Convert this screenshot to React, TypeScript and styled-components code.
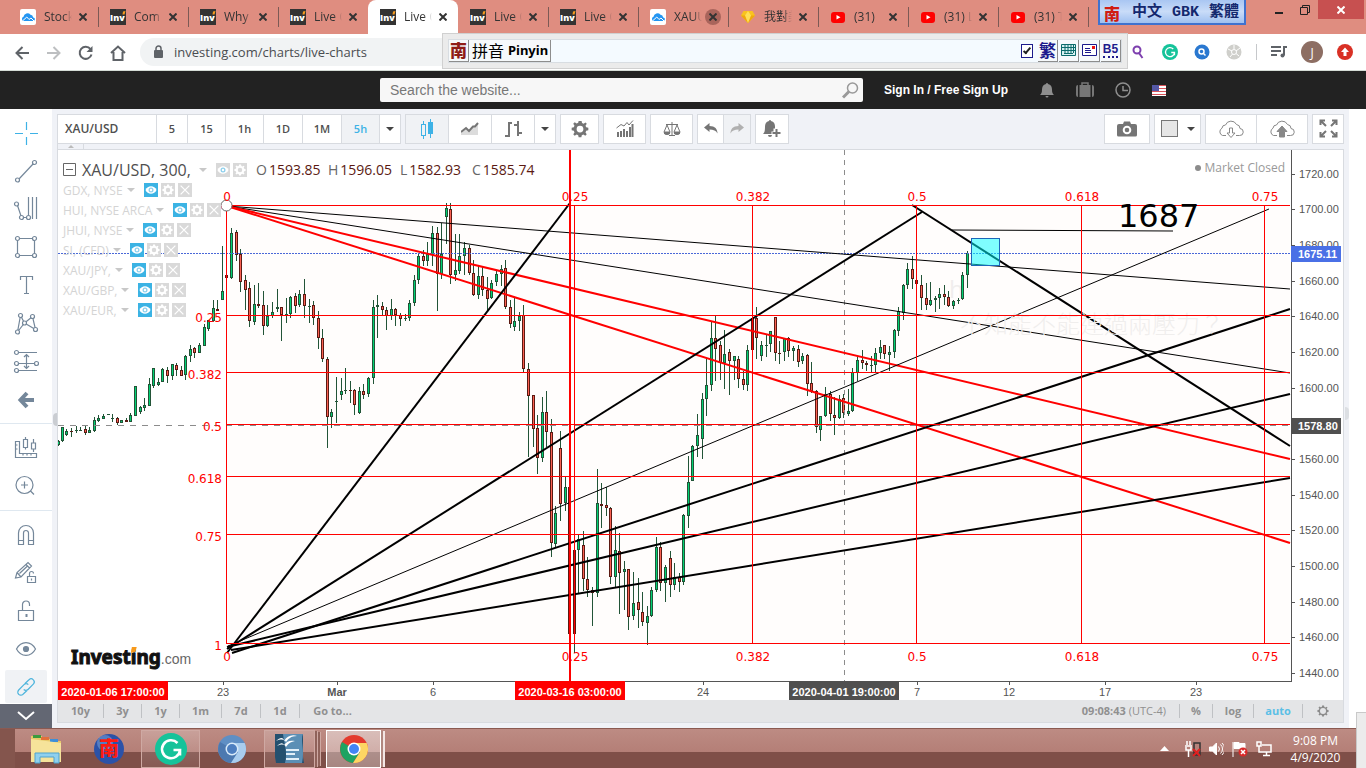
import React from 'react';
import styled, { createGlobalStyle, css } from 'styled-components';

const ui = '"Open Sans", "Noto Sans", sans-serif';
const arial = '"Liberation Sans", Arial, sans-serif';
const cjk = '"Noto Sans CJK TC", "Noto Sans CJK SC", sans-serif';

const GlobalStyle = createGlobalStyle`
  *, *::before, *::after { box-sizing: border-box; }
  body { margin: 0; background: #fff; font-family: ${ui}; overflow-x: hidden; }
  button { font: inherit; color: inherit; background: none; border: 0; padding: 0; margin: 0; cursor: pointer; }
  svg { display: block; flex: none; }
`;

const Page = styled.div`
  display: flex;
  flex-direction: column;
  min-height: 100vh;
  position: relative;
`;

/* ---------- browser tabs ---------- */

const TabStrip = styled.div`
  display: flex;
  height: 34px;
  padding-left: 8px;
  background: #df8d80;
  position: relative;
`;

const Tab = styled.div<{ $active?: boolean; $line?: boolean }>`
  display: flex;
  align-items: center;
  flex: none;
  width: 90px;
  height: 34px;
  padding-left: 12px;
  gap: 8px;
  font-size: 12px;
  color: #333;
  position: relative;
  ${(p) =>
    p.$active &&
    css`
      background: #fff;
      border-radius: 8px 8px 0 0;
    `}
  ${(p) =>
    p.$line &&
    css`
      &::after {
        content: '';
        position: absolute;
        right: -1px;
        top: 7px;
        width: 1px;
        height: 20px;
        background: #7c5a55;
      }
    `}
`;

const TabTitle = styled.span`
  width: 28px;
  overflow: hidden;
  white-space: nowrap;
  line-height: 18px;
  font-family: ${ui}, ${cjk};
  mask-image: linear-gradient(to right, #000 70%, transparent);
`;

const TabClose = styled.button<{ $hover?: boolean }>`
  display: grid;
  place-items: center;
  width: 16px;
  height: 16px;
  margin-left: -5px;
  border-radius: 8px;
  background: ${(p) => (p.$hover ? '#a9645b' : 'transparent')};
`;

const WindowButtons = styled.div`
  display: flex;
  margin-left: auto;
  height: 19px;
`;

const WindowButton = styled.button<{ $close?: boolean }>`
  display: grid;
  place-items: center;
  width: ${(p) => (p.$close ? 46 : 26)}px;
  margin-right: ${(p) => (p.$close ? 2 : 0)}px;
  height: 19px;
  background: ${(p) => (p.$close ? '#c75050' : 'transparent')};
`;

/* ---------- address bar ---------- */

const NavBar = styled.div`
  display: flex;
  align-items: center;
  height: 37px;
  padding: 0 11px 0 14px;
  border-bottom: 1px solid #d5dcd6;
  background: #fff;
`;

const NavButton = styled.button`
  display: grid;
  place-items: center;
  width: 32px;
  height: 28px;
  margin-top: 1px;
  &:first-child { width: 16px; margin-right: 8px; }
`;

const AddressBox = styled.div`
  display: flex;
  align-items: center;
  flex: 1;
  height: 28px;
  margin-left: 6px;
  padding-left: 13px;
  gap: 10px;
  border-radius: 14px;
  background: #f1f3f4;
`;

const AddressInput = styled.input`
  flex: 1;
  height: 24px;
  border: 0;
  outline: 0;
  background: transparent;
  color: #4a4d51;
  font: 13px ${ui};
  padding: 0;
`;

const Extensions = styled.div`
  display: flex;
  align-items: center;
  margin-left: 260px;
  gap: 12px;
`;

const ExtButton = styled.button`
  display: grid;
  place-items: center;
  width: 20px;
  height: 24px;
`;

const ExtDivider = styled.span`
  width: 1px;
  height: 16px;
  background: #c6c8cb;
`;

const Avatar = styled.button`
  width: 22px;
  height: 22px;
  border-radius: 11px;
  background: #8d6e63;
  color: #fff;
  font: 12px ${ui};
`;

/* ---------- floating input-method windows ---------- */

const ImeBar = styled.div`
  position: absolute;
  left: 442px;
  top: 33px;
  width: 686px;
  height: 36px;
  display: flex;
  padding: 5px;
  background: #ebebeb;
  border: 1px solid #d0d0d0;
`;

const ImeTrack = styled.div`
  display: flex;
  flex: 1;
  align-items: center;
  gap: 1px;
  border: 1px solid #d8dde2;
  background: #f4faff;
`;

const ImeKey = styled.button<{ $mode?: boolean }>`
  display: flex;
  align-items: center;
  justify-content: center;
  gap: 4px;
  height: 22px;
  width: ${(p) => (p.$mode ? 81 : 20)}px;
  background: #f6f9fb;
  border-right: 1px solid #8d8d8d;
  border-bottom: 1px solid #8d8d8d;
  color: ${(p) => (p.$mode ? '#000' : '#1c1a8c')};
  font: ${(p) => (p.$mode ? 16 : 17)}px ${cjk};
  line-height: 20px;
  padding-bottom: 2px;
  b { font: bold 13px "Noto Sans", sans-serif; }
`;

const ImeRed = styled.span`
  color: #8f1d18;
  font-weight: 900;
`;

const ImeBold = styled.span`
  font-weight: 700;
`;

const ImeSpring = styled.span`
  flex: 1;
`;

const ImeCheck = styled.input`
  appearance: none;
  width: 12px;
  height: 14px;
  margin: 0 4px;
  border: 1px solid #1c1a8c;
  background: #fff;
  position: relative;
  &:checked::after {
    content: '';
    position: absolute;
    left: 3px;
    top: 1px;
    width: 4px;
    height: 8px;
    border: solid #222;
    border-width: 0 2px 2px 0;
    transform: rotate(40deg);
  }
`;

const B5 = styled.span`
  font: bold 12px ${arial};
  line-height: 14px;
  border-bottom: 2px dotted #1c1a8c;
`;

const GbkWindow = styled.div`
  position: absolute;
  left: 1098px;
  top: 0;
  height: 25px;
  width: 148px;
  display: flex;
  align-items: center;
  padding: 3px 4px 0;
  border: 2px solid #3f72cf;
  border-top: 0;
  background: linear-gradient(#a9c6f2, #c9dcf8 50%, #9fc0f0);
  color: #14286e;
  font: bold 15px "Liberation Mono", ${cjk};
  line-height: 22px;
  gap: 10px;
  white-space: nowrap;
`;

const GbkMark = styled.span`
  color: #d01d12;
  margin-right: 2px;
  font: 900 16px ${cjk};
  line-height: 22px;
`;

/* ---------- site header ---------- */

const SiteHeader = styled.header`
  display: flex;
  align-items: center;
  height: 38px;
  padding-left: 380px;
  background: #222;
  color: #fff;
`;

const SearchBox = styled.label`
  display: flex;
  align-items: center;
  width: 483px;
  height: 24px;
  padding: 0 4px 0 10px;
  border-radius: 2px;
  background: #f7f7f7;
`;

const SearchInput = styled.input`
  flex: 1;
  border: 0;
  outline: 0;
  padding: 0;
  background: transparent;
  font: 14px ${arial};
  &::placeholder { color: #777; opacity: 1; }
`;

const SignIn = styled.a`
  margin-left: 21px;
  margin-right: 31px;
  color: #fff;
  text-decoration: none;
  font: bold 12px ${arial};
`;

const HeaderIcons = styled.div`
  display: flex;
  align-items: center;
  gap: 21px;
`;

/* ---------- main area ---------- */

const Main = styled.main`
  display: flex;
  flex: 1;
  padding-right: 17px;
`;

const Tools = styled.nav`
  display: flex;
  flex-direction: column;
  width: 52px;
  padding-top: 5px;
  background: #fff;
`;

const Tool = styled.button<{ $on?: boolean }>`
  display: grid;
  place-items: center;
  height: ${(p) => (p.$on ? 33 : 38)}px;
  margin: ${(p) => (p.$on ? '2px 5px 1px' : '0')};
  border-radius: 2px;
  background: ${(p) => (p.$on ? '#f0f2f5' : 'transparent')};
`;

const ToolRule = styled.hr`
  width: 100%;
  margin: 5px 0;
  border: 0;
  border-top: 1px solid #dfe8f0;
`;

const ToolScroll = styled.button`
  display: grid;
  place-items: center;
  flex: 1;
  background: #636773;
`;

const ChartSide = styled.section`
  flex: 1;
  min-width: 0;
  padding: 5px;
  background: #f0f2f7;
  position: relative;
`;

/* Collapse handles that sit on the frame edges. */
const EdgeHandle = styled.button<{ $right?: boolean }>`
  position: absolute;
  top: ${(p) => (p.$right ? 298 : 304)}px;
  ${(p) => (p.$right ? 'right: 0;' : 'left: 1px;')}
  width: 4px;
  height: 13px;
  border-radius: ${(p) => (p.$right ? '0 4px 4px 0' : '4px 0 0 4px')};
  background: ${(p) => (p.$right ? '#dcdfe3' : '#cacdd2')};
`;

const TopBar = styled.div`
  display: flex;
  justify-content: space-between;
  height: 30px;
`;

const Groups = styled.div`
  display: flex;
  gap: 4px;
`;

const Group = styled.div`
  display: flex;
  border: 1px solid #d8dbe0;
  background: #fff;
`;

const Cell = styled.button<{ $w: number; $on?: boolean; $title?: boolean }>`
  display: flex;
  align-items: center;
  justify-content: ${(p) => (p.$title ? 'flex-start' : 'center')};
  gap: 9px;
  width: ${(p) => p.$w}px;
  padding-left: ${(p) => (p.$title ? 7 : 0)}px;
  padding-bottom: 1px;
  border-right: 1px solid #d8dbe0;
  background: ${(p) => (p.$on ? '#f0f2f5' : 'transparent')};
  color: ${(p) => (p.$on ? '#3eb2e6' : '#4f4f4f')};
  font: 600 ${(p) => (p.$title ? 12 : 11)}px ${ui};
  &:last-child { border-right: 0; }
`;

const Swatch = styled.i`
  width: 17px;
  height: 17px;
  border: 1px solid #777;
  background: #e6e6e6;
`;

const Caret = styled.i<{ $c?: string }>`
  width: 0;
  height: 0;
  border: 4px solid transparent;
  border-bottom: 0;
  border-top-color: ${(p) => p.$c || '#444'};
`;

const Ledge = styled.div`
  display: flex;
  height: 6px;
  border: solid #d8dbe0;
  border-width: 0 0 1px 1px;
`;

const LedgeTab = styled.button`
  display: grid;
  place-items: center;
  width: 26px;
  border-right: 1px solid #d8dbe0;
  i { transform: rotate(180deg); border-width: 3px; border-bottom: 0; }
`;

const ChartFrame = styled.div`
  position: relative;
  border: solid #d8dbe0;
  border-width: 0 1px;
  background: #fff;
`;

const Plot = styled.svg`
  width: 100%;
  height: auto;
`;

const Legend = styled.div`
  position: absolute;
  left: 5px;
  top: 9px;
  display: flex;
  flex-direction: column;
`;

const LegendTitle = styled.div`
  display: flex;
  align-items: center;
  height: 21px;
  font: 16px ${ui};
  color: #4f4f4f;
  white-space: nowrap;
`;

const LegendName = styled.span`
  width: 113px;
  margin-left: 6px;
  font-weight: 500;
`;

const Quote = styled.span`
  width: 72px;
  font-size: 14px;
  color: #666;
  b { font-weight: 400; color: #5b1a13; margin-left: 2px; }
`;

const Quotes = styled.div`
  display: flex;
  margin-left: 9px;
`;

const LegendRow = styled.div`
  display: flex;
  align-items: center;
  height: 20px;
  font: 12px ${ui};
  color: #d4d4d4;
  white-space: nowrap;
`;

const LegendButtons = styled.div`
  display: flex;
  gap: 3px;
  margin-left: 9px;
`;

const SmallButton = styled.button<{ $on?: boolean }>`
  display: grid;
  place-items: center;
  width: 14px;
  height: 14px;
  background: ${(p) => (p.$on ? '#3bb3e4' : '#d9d9d9')};
`;

const RowCaret = styled(Caret)`
  margin-left: 4px;
`;

const MarketState = styled.div`
  position: absolute;
  right: 58px;
  top: 9px;
  display: flex;
  align-items: center;
  gap: 4px;
  font: 12px ${ui};
  line-height: 18px;
  color: #999;
  &::before {
    content: '';
    width: 6px;
    height: 6px;
    border-radius: 3px;
    background: #8c8c8c;
  }
`;

const Logo = styled.div`
  position: absolute;
  left: 13px;
  bottom: 29px;
  display: flex;
  align-items: baseline;
  font: bold 19px "Noto Sans", sans-serif;
  line-height: 28px;
  color: #111;
  -webkit-text-stroke: 1px #111;
  small { font: 14px ${arial}; color: #666; -webkit-text-stroke: 0; }
`;

const LogoDot = styled.span`
  position: relative;
  &::before {
    content: '';
    position: absolute;
    left: 0;
    top: 4px;
    width: 6px;
    height: 6px;
    background: #f79a1c;
    clip-path: polygon(20% 0, 100% 0, 80% 80%, 0 100%);
    box-shadow: 0 0 0 1px #fff;
  }
`;

const RangeBar = styled.div`
  display: flex;
  justify-content: space-between;
  align-items: center;
  height: 23px;
  padding-bottom: 1px;
  border: 1px solid #d8dbe0;
  border-top: 0;
  background: #e4e5e7;
  color: #909090;
  font: bold 11px ${ui};
`;

const RangeList = styled.div`
  display: flex;
  align-items: center;
`;

const RangeItem = styled.button<{ $w: number; $blue?: boolean }>`
  width: ${(p) => p.$w}px;
  height: 14px;
  line-height: 14px;
  border-left: 1px solid #bfc1c4;
  color: ${(p) => (p.$blue ? '#5bbfe6' : 'inherit')};
  display: grid;
  place-items: center;
  &:first-child { border-left: 0; }
`;

const Clock = styled.span`
  margin-right: 13px;
  span { font-weight: 400; }
`;

/* ---------- desktop taskbar ---------- */

const Taskbar = styled.footer`
  display: flex;
  height: 40px;
  background: #ececec;
`;

const TaskbarBody = styled.div`
  display: flex;
  align-items: center;
  flex: 1;
  padding-left: 15px;
  border-top: 1px solid #8a5a52;
  background:
    linear-gradient(#84554d, #84554d) 0 0 / 15px 100% no-repeat,
    linear-gradient(#bd8b83, #b47f77 23px, #7f4f48 23px, #7f4f48);
  color: #fff;
`;

const TaskButton = styled.button<{ $w: number; $open?: boolean; $front?: boolean; $stack?: boolean }>`
  display: grid;
  place-items: center;
  width: ${(p) => p.$w}px;
  height: 38px;
  ${(p) =>
    p.$open &&
    css`
      border: 1px solid #cfa9a3;
      background: linear-gradient(#ffffff30, #ffffff10);
    `}
  ${(p) =>
    p.$stack &&
    css`
      box-shadow: 3px 0 0 -1px #8f625a, 4px 0 0 -1px #cfa9a3, 7px 0 0 -2px #8f625a, 8px 0 0 -2px #cfa9a3;
    `}
  ${(p) =>
    p.$front &&
    css`
      border: 1px solid #fff;
      background: linear-gradient(#ffffff70, #ffffff50);
      box-shadow: 3px 0 0 -1px #b18880, 5px 0 0 -1px #f3e6e4;
    `}
`;

const TaskGap = styled.span<{ $w: number }>`
  width: ${(p) => p.$w}px;
`;

const Tray = styled.div`
  display: flex;
  align-items: center;
  gap: 8px;
  margin-left: auto;
`;

const TaskClock = styled.time`
  width: 76px;
  padding-right: 5px;
  text-align: center;
  font: 12px ${ui};
  line-height: 17px;
`;

const CornerPanel = styled.div`
  width: 10px;
  height: 56px;
  margin-top: -16px;
  border: solid #c9c9c9;
  border-width: 1px 0 0 1px;
  background: #ececec;
`;

/* ---------- chart data ---------- */

type Candle = { x: number; hi: number; top: number; bot: number; lo: number; up: boolean };

// Candles are stored per block: an origin and rows of
// "x wickTop bodyTop bodyBottom wickBottom direction" in thirds of a chart unit.
const blocks: { ox: number; oy: number; rows: string }[] = [
  {
    ox: 0,
    oy: 330,
    rows:
      '176 330 332 346 347 g;187 290 292 334 335 g;199 298 304 314 317 g;214 294 303 307 320 r;229 288 299 303 308 g;241 290 300 302 304 g;256 288 297 309 315 r;268 292 300 308 310 g;283 262 270 303 306 g;295 254 264 272 276 g;310 252 258 266 268 g;325 252 252 254 254 g;337 252 264 266 276 g;352 260 265 278 286 r;364 269 271 278 278 g;379 264 270 275 276 r;391 249 256 276 276 g;406 168 169 257 258 g;421 227 231 246 251 g;433 204 226 233 242 g;448 143 163 227 228 g;460 114 115 167 174 g;475 143 156 164 167 g;487 113 118 155 156 g;502 111 120 137 158 r;517 101 103 137 151 g;529 100 106 121 138 r;544 107 121 137 138 r;556 74 78 136 150 g;571 44 58 79 95 g;583 52 55 68 85 r;598 38 45 68 70 g',
  },
  {
    ox: 0,
    oy: 140,
    rows:
      '613 552 562 617 618 g;625 540 541 567 573 g;640 480 504 542 545 g;652 480 508 513 513 r;667 318 454 480 480 g;679 404 405 413 413 r;694 264 280 413 417 g;709 270 276 344 362 r;721 326 341 425 456 r;736 404 420 450 510 r;748 426 444 543 561 r;763 434 492 545 555 g;775 428 491 498 505 r;790 453 495 557 584 r;802 495 527 557 560 g;817 486 515 527 534 g;832 446 501 506 516 g',
  },
  {
    ox: 280,
    oy: 150,
    rows:
      '4 472 472 496 572 r;19 444 493 497 518 g;31 438 440 493 503 g;46 430 438 467 490 r;58 421 433 466 472 g;73 387 433 469 503 r;88 448 468 471 518 g;100 453 466 505 524 r;115 483 505 565 597 r;127 538 565 628 635 r;142 621 628 802 894 r;154 777 787 800 833 g;169 681 752 756 820 g;184 684 724 736 749 g;196 654 720 724 731 g;211 694 720 723 760 r;223 717 721 766 795 r;238 712 724 790 792 g;250 703 724 736 746 r;265 682 685 733 741 g;280 451 472 685 702 g;292 436 466 472 563 g;307 457 469 481 497 r;319 472 481 499 540 r;334 448 478 499 510 g;346 475 478 496 528 r;361 489 495 508 527 r;376 492 504 508 512 g;388 451 460 505 513 g;403 375 391 460 468 g;415 308 319 391 402 g;430 299 319 334 347 r;442 276 313 334 348 g;457 228 250 316 347 g;472 232 250 373 483 r;484 218 313 373 388 g;499 159 175 202 282 g;511 159 178 376 402 r;526 252 361 376 394 g;538 252 319 364 372 g;553 276 295 319 376 g;568 286 295 370 375 r;580 331 370 436 438 r;595 346 379 436 447 g;607 348 379 421 439 r;622 382 421 448 482 r;634 390 400 445 446 g;649 361 373 397 408 g;664 346 358 373 408 g;676 330 355 472 478 r;691 451 472 523 533 r;703 442 514 532 542 g;718 487 499 514 544 g;730 466 496 658 670 r;745 640 658 739 920 r',
  },
  {
    ox: 480,
    oy: 380,
    rows:
      '160 44 46 146 200 r;172 106 145 235 281 r;187 50 97 235 245 g;199 34 97 157 200 r;214 118 157 490 530 r;226 379 400 493 502 g;241 153 205 373 422 r;256 291 322 370 392 g;268 303 322 763 790 r;283 490 511 763 818 r;295 463 478 511 640 g;310 454 496 598 633 r;322 531 598 631 651 r;337 622 631 640 738 r;352 267 370 640 651 g;364 310 373 379 443 r;379 321 376 385 407 r;391 382 385 592 613 r;406 439 511 592 622 g;418 460 514 580 702 r;433 544 568 577 689 g;445 566 568 712 749 r;460 577 670 709 721 g;475 594 667 691 743 r;487 636 697 727 738 r;502 678 709 730 795 g;514 621 631 709 711 g;529 471 502 631 636 g;541 485 502 610 632 r;556 556 562 610 665 g;571 514 535 616 651 r;583 549 592 616 630 g;598 580 592 607 636 r;610 403 406 607 614 g;625 228 307 409 444 g;637 196 199 304 304 g;652 102 166 199 230 g;667 40 58 178 236 g',
  },
  {
    ox: 680,
    oy: 180,
    rows:
      '79 535 616 658 707 g;94 424 475 616 632 g;106 408 475 508 603 r;121 484 496 550 600 r;133 450 523 550 627 g;148 508 517 544 644 r;163 528 529 544 600 g;175 529 538 598 624 r;190 572 598 616 629 r;202 496 511 616 632 g;217 410 415 511 513 r;229 381 415 475 536 r;244 484 496 529 543 g;259 463 494 497 532 g;271 453 454 493 515 g;286 411 412 520 543 r;298 484 519 523 552 r;313 474 475 515 542 g;325 472 475 514 530 r;340 498 505 514 543 g;355 496 508 545 560 r;367 519 529 542 553 g;382 523 526 613 647 r;394 546 610 632 640 r;409 630 632 742 759 r;421 709 709 751 783 g;436 620 643 709 711 g;451 632 643 703 724 r;463 652 706 715 765 r;478 646 658 715 717 g;490 642 655 700 714 r;505 626 694 701 708 g;517 565 577 694 696 g;532 528 541 580 603 g;547 510 541 550 568 r;559 543 550 556 572 r;574 528 555 557 575 g;586 504 520 556 580 g;601 480 502 520 538 g;613 495 496 523 538 r;628 499 517 526 572 g;643 446 451 517 533 g;655 382 394 454 467 g;670 312 316 400 420 g;682 249 268 316 327 g;697 228 268 298 327 r;709 299 301 313 314 r;724 286 316 355 389 r;739 309 355 376 389 r;751 306 361 376 378 g;766 349 355 361 395 g;778 324 343 355 387 g;793 315 343 352 376 r;805 334 352 379 381 r;820 360 364 379 386 g;835 355 361 364 372 g;847 277 286 358 360 g;862 213 220 286 323 g',
  },
];

const candles: Candle[] = blocks.flatMap(({ ox, oy, rows }) =>
  rows.split(';').map((row) => {
    const f = row.split(' ');
    const y = (v: string) => oy + Math.round(Number(v) / 3);
    return {
      x: ox + Math.floor(Number(f[0]) / 3),
      hi: y(f[1]),
      top: y(f[2]),
      bot: y(f[3]),
      lo: y(f[4]),
      up: f[5] === 'g',
    };
  }),
);

const levels = [
  { y: 205, label: '0', ly: 212 },
  { y: 315, label: '0.25', ly: 322 },
  { y: 372, label: '0.382', ly: 379 },
  { y: 424, label: '0.5', ly: 431 },
  { y: 476, label: '0.618', ly: 483 },
  { y: 534, label: '0.75', ly: 541 },
  { y: 643, label: '1', ly: 650 },
];

const zones = [
  { x: 226, label: '0' },
  { x: 574, label: '0.25' },
  { x: 752, label: '0.382' },
  { x: 916, label: '0.5' },
  { x: 1081, label: '0.618' },
  { x: 1264, label: '0.75' },
];

const prices = Array.from({ length: 15 }, (_, i) => ({
  y: Math.round(173.5 + i * 35.69),
  label: `${1720 - i * 20}.00`,
}));

const cursorPrice = '1578.80';
const hiddenPrice = '1580.00';

const dates: [number, string, boolean?][] = [
  [223, '23'],
  [337, 'Mar', true],
  [433, '6'],
  [703, '24'],
  [917, '7'],
  [1009, '12'],
  [1105, '17'],
  [1196, '23'],
];

const fans: [number, number, number, number, string, number][] = [
  [227, 206, 1290, 289, '#000', 1],
  [227, 206, 1290, 373, '#000', 1],
  [227, 206, 1290, 459, '#f00', 2],
  [227, 206, 1290, 543, '#f00', 2],
  [227, 653, 570, 203, '#000', 2],
  [227, 649, 922, 212, '#000', 2],
  [228, 646, 1269, 209, '#000', 1],
  [232, 653, 1290, 309, '#000', 2],
  [227, 647, 1290, 394, '#000', 2],
  [231, 650, 1290, 478, '#000', 2],
  [912, 205, 1290, 446, '#000', 2],
  [952, 230, 1173, 231, '#000', 1],
];

function PriceTag({ y, color, label }: { y: number; color: string; label: string }) {
  return (
    <g>
      <rect x="1291" y={y - 8} width="50" height="16" fill={color} shapeRendering="crispEdges" />
      <text x="1298" y={y + 4} fontWeight="bold" fill="#fff">{label}</text>
    </g>
  );
}

function DateTag({ x, color, label }: { x: number; color: string; label: string }) {
  return (
    <g>
      <rect x={x} y="681" width="110" height="19" fill={color} shapeRendering="crispEdges" />
      <text x={x + 55} y="696" fontWeight="bold" fill="#fff" textAnchor="middle">{label}</text>
    </g>
  );
}

function PriceChart() {
  return (
    <Plot viewBox="58 150 1285 550" role="img" aria-label="XAU/USD candlestick chart">
      <rect x="227" y="205" width="1063" height="439" fill="#fffdfc" />
      <text x="949" y="298" fill="#f0eeed" fontFamily={ui} fontSize="24">h</text>
      <g shapeRendering="crispEdges">
        {candles.map((c, i) => {
          const edge = c.up ? '#225437' : '#5b1a13';
          return (
            <g key={i}>
              <rect x={c.x} y={c.hi} width="1" height={Math.max(1, c.lo - c.hi)} fill="#225437" />
              <rect x={c.x - 1} y={c.top} width="3" height={Math.max(1, c.bot - c.top)} fill={edge} />
              {c.bot - c.top > 2 && (
                <rect x={c.x} y={c.top + 1} width="1" height={c.bot - c.top - 2} fill={c.up ? '#00d173' : '#fa6152'} />
              )}
            </g>
          );
        })}
      </g>
      <line x1="58" x2="1290" y1="425.5" y2="425.5" stroke="#8c8c8c" strokeDasharray="6 6" />
      <line x1="844.5" x2="844.5" y1="150" y2="681" stroke="#8c8c8c" strokeDasharray="5 5" />
      <line x1="58" x2="1290" y1="253.5" y2="253.5" stroke="#4a68d8" strokeDasharray="2 1" />
      {fans.map(([x1, y1, x2, y2, color, w], i) => (
        <line key={i} x1={x1} y1={y1} x2={x2} y2={y2} stroke={color} strokeWidth={w} />
      ))}
      <text x="960" y="333" fill="#f0eeed" fontFamily={cjk} fontWeight="300" fontSize="24">不知能不能連過兩壓力？</text>
      <g fill="#f00" shapeRendering="crispEdges">
        {levels.map((l) => (
          <rect key={l.label} x="226" y={l.y} width="1064" height="1" />
        ))}
        {zones.map((z) => (
          <rect key={z.label} x={z.x} y="205" width="1" height="439" />
        ))}
        <rect x="569" y="150" width="2" height="532" />
      </g>
      <rect x="971.5" y="238.5" width="28" height="27" fill="#00ffff" fillOpacity="0.5" stroke="#1c66b8" />
      <circle cx="226.5" cy="205.5" r="5.5" fill="#fff" stroke="#666" />
      <g fill="#f00" fontFamily='"DejaVu Sans", sans-serif' fontSize="12">
        {levels.map((l) => (
          <text key={l.label} x="222" y={l.ly} textAnchor="end">{l.label}</text>
        ))}
        {zones.map((z) => (
          <React.Fragment key={z.label}>
            <text x={z.x + 1} y="201" textAnchor="middle">{z.label}</text>
            <text x={z.x + 1} y="661" textAnchor="middle">{z.label}</text>
          </React.Fragment>
        ))}
      </g>
      <text x="1118" y="227" fontFamily='"DejaVu Sans", sans-serif' fontSize="32">1687</text>
      <g fill="#555" shapeRendering="crispEdges">
        <rect x="1291" y="150" width="1" height="532" />
        <rect x="58" y="681" width="1233" height="1" />
        {prices.map((p) => (
          <rect key={p.label} x="1292" y={p.y} width="3" height="1" />
        ))}
        {dates.map(([x]) => (
          <rect key={x} x={x} y="682" width="1" height="3" />
        ))}
      </g>
      <g fill="#555" fontFamily={arial} fontSize="11">
        {prices
          .filter((p) => p.label !== hiddenPrice)
          .map((p) => (
            <text key={p.label} x="1299" y={p.y + 4}>{p.label}</text>
          ))}
        {dates.map(([x, label, bold]) => (
          <text key={x} x={x} y="696" textAnchor="middle" fontWeight={bold ? 'bold' : 'normal'}>{label}</text>
        ))}
        <PriceTag y={254} color="#4a70e6" label="1675.11" />
        <PriceTag y={426} color="#505050" label={cursorPrice} />
        <DateTag x={58} color="#f00" label="2020-01-06 17:00:00" />
        <DateTag x={515} color="#f00" label="2020-03-16 03:00:00" />
        <DateTag x={789} color="#505050" label="2020-04-01 19:00:00" />
      </g>
    </Plot>
  );
}

/* ---------- icons ---------- */

function Cross({ size = 8, color = '#333', w = 2 }: { size?: number; color?: string; w?: number }) {
  return (
    <svg width={size} height={size} viewBox="0 0 8 8" stroke={color} strokeWidth={w}>
      <path d="M0.5 0.5 7.5 7.5M7.5 0.5 0.5 7.5" />
    </svg>
  );
}

function InvIcon() {
  return (
    <svg width="16" height="16" viewBox="0 0 16 16">
      <rect width="16" height="16" fill="#333" />
      <text x="0" y="12" fontFamily="Open Sans" fontSize="9" fontWeight="800" fill="#fff">Inv</text>
      <path d="M13 2.5 15.5 2 14.5 5.5 12.5 5.5Z" fill="#f79a1c" />
    </svg>
  );
}

function CloudIcon() {
  return (
    <svg width="16" height="16" viewBox="0 0 16 16">
      <rect width="16" height="16" rx="2" fill="#fff" />
      <path d="M3.5 12a2.200 2.200 0 0 1 0-4.200A4 4 0 0 1 10.500 5.800a3.200 3.200 0 0 1 2.700 2.600 1.800 1.800 0 0 1-.2 3.600Z" fill="#2295f2" />
      <path d="M3 11.500 6.800 8 9 10.500 11 9 14 12" fill="none" stroke="#fff" />
    </svg>
  );
}

function GemIcon() {
  return (
    <svg width="16" height="16" viewBox="0 0 16 16">
      <path d="M3.5 2h9L15 6.5 8 14 1 6.5Z" fill="#f9c31f" />
      <path d="M1 6.5h14L8 14Z" fill="#f0a80e" />
      <path d="M5 6.5 8 2l3 4.5L8 14Z" fill="#ffdf57" />
    </svg>
  );
}

function YouTubeIcon() {
  return (
    <svg width="16" height="16" viewBox="0 0 16 16">
      <rect x="1" y="3" width="14" height="11" rx="3" fill="#f00" />
      <path d="M6.5 6v4.6l4-2.3Z" fill="#fff" />
    </svg>
  );
}

const gearPath =
  'M8 0.8 9.4 0.8 9.8 2.7 11.2 3.3 12.9 2.2 14 3.3 12.9 5 13.5 6.4 15.4 6.8 15.4 9.2 13.5 9.6 12.9 11 14 12.7 12.7 14 11 12.9 9.6 13.5 9.2 15.4 6.8 15.4 6.4 13.5 5 12.9 3.3 14 2 12.7 3.1 11 2.5 9.6 0.6 9.2 0.6 6.8 2.5 6.4 3.1 5 2 3.3 3.3 2 5 3.1 6.4 2.5 6.8 0.8Z';

function Gear({ size, color, hole }: { size: number; color: string; hole: string }) {
  return (
    <svg width={size} height={size} viewBox="0 0 16 16">
      <path d={gearPath} fill={color} />
      <circle cx="8" cy="8" r="3" fill={hole} />
    </svg>
  );
}

function GearOutline() {
  return (
    <svg width="12" height="12" viewBox="0 0 16 16">
      <path d={gearPath} fill="#8c8c8c" />
      <circle cx="8" cy="8" r="4" fill="#e4e5e7" />
    </svg>
  );
}

function SmallEye() {
  return (
    <svg width="12" height="10" viewBox="0 0 12 10">
      <path d="M0.500 5C2.500 0 9.500 0 11.500 5 9.500 10 2.500 10 0.500 5Z" fill="#fff" />
      <circle cx="6" cy="5" r="2.500" fill="#8fd0ec" />
      <circle cx="6" cy="5" r="1.200" fill="#fff" />
    </svg>
  );
}

const slate = '#74879a';

function Ring({ x, y }: { x: number; y: number }) {
  return <circle cx={x} cy={y} r="2" fill="#fff" />;
}

function ToolSvg({ children, color = slate }: { children: React.ReactNode; color?: string }) {
  return (
    <svg width="26" height="26" viewBox="0 0 26 26" fill="none" stroke={color} strokeWidth="1.2">
      {children}
    </svg>
  );
}

const tools1: [string, React.ReactNode][] = [
  ['Crosshair', <ToolSvg color="#3eb2e6"><path d="M13.500 2v8M13.500 17v8M2 13.500h8M17 13.500h8" /></ToolSvg>],
  ['Trend line', <ToolSvg><path d="M5 22 21 5" /><Ring x={4.5} y={22} /><Ring x={21.5} y={4.5} /></ToolSvg>],
  ['Pitchfork', <ToolSvg><path d="M4 8 8.500 21.500H15.500V1M19.500 1v22M23.500 1v22" /><Ring x={3.5} y={8} /><Ring x={8.5} y={21.5} /><Ring x={15.5} y={21.5} /></ToolSvg>],
  ['Rectangle', <ToolSvg><path d="M4.500 4.500h17v17h-17z" /><Ring x={4.5} y={4.5} /><Ring x={21.5} y={4.5} /><Ring x={4.5} y={21.5} /><Ring x={21.5} y={21.5} /></ToolSvg>],
  ['Text', <ToolSvg><path d="M7.500 8V4.500h12V8M13.500 4.500v17M11 21.500h5" /></ToolSvg>],
  ['Pattern', <ToolSvg><path d="M4.500 22 7.500 5.500 11.500 13 19.500 6.500 22.500 19.500 11.500 13Z" /><Ring x={4.5} y={22} /><Ring x={7.5} y={5.5} /><Ring x={11.5} y={13} /><Ring x={19.5} y={6.5} /><Ring x={22.5} y={19.5} /></ToolSvg>],
  ['Position', <ToolSvg><path d="M5 4.500h19M5 15.500h16M5 22.500h19M13.500 7v13M11 9l2.500-2.500L16 9M11 18l2.500 2.500L16 18" /><Ring x={3.5} y={4.5} /><Ring x={3.5} y={15.5} /><Ring x={23.5} y={15.5} /><Ring x={3.5} y={22.5} /></ToolSvg>],
  ['Back', <ToolSvg><path d="M14 7 7.500 14 14 21M8 14h13" strokeWidth="4" /></ToolSvg>],
];

const tools2: [string, React.ReactNode][] = [
  ['Measure', <ToolSvg><path d="M2.500 6.500h4v12h17v4h-21zM2.500 10h2M2.500 14h2M10 18.500v2M14 18.500v2M18 18.500v2M10.500 4.500h4v8h-4zM12.500 2v2.500M12.500 12.500v2M18.500 8h4v6h-4zM20.500 4v4M20.500 14v3" /></ToolSvg>],
  ['Zoom in', <ToolSvg><circle cx="11.500" cy="12" r="8.500" /><path d="M17.500 18 21 21.500M11.500 8.500v7M8 12h7" /></ToolSvg>],
];

const tools3: [string, React.ReactNode][] = [
  ['Magnet', <ToolSvg><path d="M5.500 22.500V11a7.500 7.500 0 0 1 15 0V22.500h-5V11a2.500 2.500 0 0 0-5 0V22.500ZM5.500 18.500h5M15.500 18.500h5" /></ToolSvg>],
  ['Lock drawings', <ToolSvg><path d="M2.500 18 4 12.500 15 2.500 18.500 6 8 17ZM13 4.500 16.500 8M4 12.500 8 17M6.500 13.500 14.500 6M14.500 16.500h8v6h-8zM16.500 16.500v-3a2 2 0 0 1 4 0M18.500 18.500v2" /></ToolSvg>],
  ['Unlock', <ToolSvg><path d="M5.500 12.500h15v10h-15zM9.500 12.500V6.500a3.500 3.500 0 0 1 7 0V8" /><path d="M13.500 16v3" strokeWidth="2" /></ToolSvg>],
  ['Hide drawings', <ToolSvg><path d="M3.500 13C8 4.500 18 4.500 22.500 13 18 21.500 8 21.500 3.500 13Z" /><circle cx="13" cy="13" r="2.500" fill={slate} /></ToolSvg>],
];

function LinkIcon() {
  return (
    <ToolSvg color="#4cb4dc">
      <path d="M12 9.500 16 5.800a3 3 0 0 1 4.300 4.300L15 15.500a3 3 0 0 1-4.300 0M14 16.500 10 20.300a3 3 0 0 1-4.300-4.300L11 10.600a3 3 0 0 1 4.300 0" />
    </ToolSvg>
  );
}

const gray = '#757575';

function CandleIcon() {
  return (
    <svg width="14" height="20" viewBox="0 0 14 20" stroke="#3eb2e6">
      <path d="M3.500 2v18M10.500 0v19" />
      <rect x="1.500" y="5.500" width="4" height="11" fill="#f0f2f5" />
      <rect x="8.500" y="3.500" width="4" height="11" fill="#3eb2e6" />
    </svg>
  );
}
function AreaIcon() {
  return (
    <svg width="18" height="14" viewBox="0 0 18 14">
      <path d="M0 10 5 6 8 9 17 1V13H0Z" fill="#dcdcdc" />
      <path d="M0 10 5 6 8 9 12 4.500 14 4.500 17 1" fill="none" stroke={gray} strokeWidth="2" />
    </svg>
  );
}
function BarsIcon() {
  return (
    <svg width="18" height="18" viewBox="0 0 18 18" fill="none" stroke={gray} strokeWidth="2">
      <path d="M5 2v15M5 3h3M1 16h4M14 1v15M10 5h4M14 13h4" />
    </svg>
  );
}
function IndicatorIcon() {
  return (
    <svg width="18" height="17" viewBox="0 0 18 17" stroke={gray} fill="none">
      <path d="M2 17v-5M5 17v-6M8 17V9M11 17v-6M14 17V7M16.500 17V4" strokeWidth="2" />
      <path d="M0.500 8 5 4.500 8 6 11 2.500 13 5 17 0.500" />
    </svg>
  );
}
function ScalesIcon() {
  return (
    <svg width="18" height="14" viewBox="0 0 18 14" stroke={gray} fill="none">
      <path d="M3 2.500h12M9 0v13M6 13.500h6M4 3 1 10h6ZM14 3l-3 7h6Z" />
      <path d="M1 10.500a3 2 0 0 0 6 0ZM11 10.500a3 2 0 0 0 6 0Z" fill={gray} />
    </svg>
  );
}
function UndoIcon({ flip }: { flip?: boolean }) {
  return (
    <svg width="14" height="11" viewBox="0 0 14 11">
      <path
        d={flip ? 'M14 4.500 8.500 0V3C3 3 0.500 6 0.500 10.500 2 7.500 4.500 6.500 8.500 6.500V9Z' : 'M0 4.500 5.500 0V3C11 3 13.500 6 13.500 10.500 12 7.500 9.500 6.500 5.500 6.500V9Z'}
        fill={flip ? '#b0b0b0' : gray}
      />
    </svg>
  );
}
function AlertIcon() {
  return (
    <svg width="18" height="17" viewBox="0 0 18 17" fill={gray}>
      <path d="M7 0a1 1 0 0 1 1 1c3 .6 4 3 4 5.500V8.500h-1.500v3H8.500V14H0C1.500 12.500 2 11 2 6.500 2 4 3 1.600 6 1a1 1 0 0 1 1-1ZM5 15h4a2 2 0 0 1-4 0Z" />
      <path d="M13.500 9v8M9.500 13h8" stroke={gray} strokeWidth="2" />
    </svg>
  );
}
function CameraIcon() {
  return (
    <svg width="20" height="16" viewBox="0 0 20 16">
      <path d="M2 3h4L7 .500h6L14 3h4a2 2 0 0 1 2 2v9a1.500 1.500 0 0 1-1.500 1.500h-17A1.500 1.500 0 0 1 0 14V5a2 2 0 0 1 2-2Z" fill={gray} />
      <circle cx="10" cy="9" r="3.300" fill={gray} stroke="#fff" strokeWidth="2" />
    </svg>
  );
}
function CloudArrow({ up }: { up?: boolean }) {
  return (
    <svg width="26" height="18" viewBox="0 0 26 18" fill="none" stroke="#888">
      <path d="M8 15.500H4.500A4 4 0 0 1 4 8.200 3.500 3.500 0 0 1 7.500 5 6 6 0 0 1 18.500 4.500 4 4 0 0 1 22 8.500a3.500 3.500 0 0 1-.500 7H18" />
      {up ? <path d="M13 6 18 11.500H15.500V17H10.500V11.500H8Z" fill="#888" /> : <path d="M11.500 8h3v5H17l-4 4.500L9 13h2.500Z" />}
    </svg>
  );
}
function ExpandIcon() {
  return (
    <svg width="19" height="19" viewBox="0 0 19 19" fill="none" stroke={gray} strokeWidth="2">
      <path d="M1.500 6V1.500H6M2 2l5 5M17.500 6V1.500H13M17 2l-5 5M1.500 13v4.500H6M2 17l5-5M17.500 13v4.500H13M17 17l-5-5" />
    </svg>
  );
}

function ChromeIcon({ blue }: { blue?: boolean }) {
  const c = blue ? ['#5f8fc4', '#a9cdee', '#4c79b0', '#d9ebf9'] : ['#e33b2e', '#fdd663', '#1ea362', '#fff'];
  return (
    <svg width="30" height="30" viewBox="0 0 30 30">
      <circle cx="15" cy="15" r="14" fill={c[0]} />
      <path d="M15 15 3 8A14 14 0 0 0 14 29L21 18Z" fill={c[2]} />
      <path d="M15 9H27.700A14 14 0 0 1 14 29L21 18Z" fill={c[1]} />
      <circle cx="15" cy="15" r="6.500" fill={c[3]} />
      <circle cx="15" cy="15" r="5" fill={blue ? '#4d7fc0' : '#4285f4'} />
    </svg>
  );
}

function FolderIcon() {
  return (
    <svg width="33" height="30" viewBox="0 0 33 30">
      <path d="M1 2h11v3h9v2h10v20H1Z" fill="#e8c969" />
      <path d="M3 1h8v3H3Z" fill="#3b9b3e" />
      <path d="M11 3h8v3h-8Z" fill="#e2703a" />
      <path d="M20 5h8v3h-8Z" fill="#3d8fd8" />
      <path d="M1 5 31 9V28H1Z" fill="#f6e39a" />
      <path d="M5 29V19h24v10h-5v-6H10v6Z" fill="#8fd0ee" stroke="#4ea3cf" />
    </svg>
  );
}

function NanjiIcon() {
  return (
    <svg width="32" height="32" viewBox="0 0 32 32">
      <circle cx="16" cy="16" r="15" fill="#2b52a8" />
      <circle cx="12" cy="10" r="8" fill="#7fa7dd" fillOpacity="0.5" />
      <text x="16" y="23" textAnchor="middle" fontFamily={cjk} fontWeight="900" fontSize="20" fill="#fb1b12">南</text>
    </svg>
  );
}

function GrammarlyIcon({ size }: { size: number }) {
  return (
    <svg width={size} height={size} viewBox="0 0 32 32" fill="none">
      <circle cx="16" cy="16" r="16" fill="#15c39a" />
      <path d="M22.500 10A9 9 0 1 0 25 17H18.500M25 16.500v6" stroke="#fff" strokeWidth="2.600" />
    </svg>
  );
}

function OfficeIcon() {
  return (
    <svg width="31" height="31" viewBox="0 0 31 31">
      <path d="M1 1h28v23l1 6H2L1 24Z" fill="#24506f" />
      <path d="M9 1h20c-3 6 2 16-1 29H11c3-10-1-20-2-29Z" fill="#5b8fb5" />
      <path d="M2 8c5-5 8-3 8 0 3-5 8-7 13-5-6 0-9 3-11 6-2-3-5-3-10-1ZM3 13c4-4 6-3 7-1 3-4 6-5 11-4-5 1-7 3-9 6-2-3-4-3-9-1Z" fill="#fff" />
      <path d="M12 17h13M12 21h9M12 26h13" stroke="#e2eff8" strokeWidth="2" />
    </svg>
  );
}

/* ---------- page ---------- */

const tabs: { icon: React.ReactNode; title: string; active?: boolean; hover?: boolean; line?: boolean }[] = [
  { icon: <CloudIcon />, title: 'Stock', line: true },
  { icon: <InvIcon />, title: 'Com', line: true },
  { icon: <InvIcon />, title: 'Why', line: true },
  { icon: <InvIcon />, title: 'Live C' },
  { icon: <InvIcon />, title: 'Live C', active: true },
  { icon: <InvIcon />, title: 'Live C', line: true },
  { icon: <InvIcon />, title: 'Live C', line: true },
  { icon: <CloudIcon />, title: 'XAUU', hover: true, line: true },
  { icon: <GemIcon />, title: '我對美', line: true },
  { icon: <YouTubeIcon />, title: '(31)', line: true },
  { icon: <YouTubeIcon />, title: '(31) L', line: true },
  { icon: <YouTubeIcon />, title: '(31) T', line: true },
];

const symbols = ['GDX, NYSE', 'HUI, NYSE ARCA', 'JHUI, NYSE', 'SI, (CFD)', 'XAU/JPY,', 'XAU/GBP,', 'XAU/EUR,'];

const frames: [string, number][] = [
  ['5', 31],
  ['15', 38],
  ['1h', 38],
  ['1D', 39],
  ['1M', 39],
  ['5h', 38],
];

function ToolList({ items }: { items: [string, React.ReactNode][] }) {
  return (
    <>
      {items.map(([name, icon]) => (
        <Tool key={name} aria-label={name}>{icon}</Tool>
      ))}
    </>
  );
}

export default function App() {
  return (
    <Page>
      <GlobalStyle />
      <TabStrip>
        {tabs.map((t, i) => (
          <Tab key={i} $active={t.active} $line={t.line}>
            {t.icon}
            <TabTitle>{t.title}</TabTitle>
            <TabClose $hover={t.hover} aria-label="Close tab">
              <Cross />
            </TabClose>
          </Tab>
        ))}
        <WindowButtons>
          <WindowButton aria-label="Minimize">
            <svg width="8" height="14"><rect y="9" width="8" height="2" fill="#222" /></svg>
          </WindowButton>
          <WindowButton aria-label="Restore">
            <svg width="10" height="10" fill="none" stroke="#222">
              <path d="M0.500 2.500h7v7h-7zM2.500 2.500v-2h7v7h-2" />
            </svg>
          </WindowButton>
          <WindowButton $close aria-label="Close"><Cross color="#fff" w={2} /></WindowButton>
        </WindowButtons>
      </TabStrip>

      <NavBar>
        <NavButton aria-label="Back">
          <svg width="14" height="14" fill="none" stroke="#5f6368" strokeWidth="2"><path d="M14 7H1.500M7.500 1 1.500 7l6 6" /></svg>
        </NavButton>
        <NavButton aria-label="Forward">
          <svg width="14" height="14" fill="none" stroke="#bdbfc1" strokeWidth="2"><path d="M0 7h12.500M6.500 1l6 6-6 6" /></svg>
        </NavButton>
        <NavButton aria-label="Reload">
          <svg width="16" height="16" fill="none" stroke="#5f6368" strokeWidth="2">
            <path d="M13.500 9.500A6 6 0 1 1 12.500 4.200" />
            <path d="M14.500 1v6h-6Z" fill="#5f6368" stroke="none" />
          </svg>
        </NavButton>
        <NavButton aria-label="Home">
          <svg width="16" height="16" fill="none" stroke="#5f6368" strokeWidth="2"><path d="M1 8 8 1.500 15 8M3.500 7v8h9V7" /></svg>
        </NavButton>
        <AddressBox>
          <svg width="11" height="14" viewBox="0 0 11 14">
            <rect x="1" y="5" width="9" height="8" rx="1" fill="#5f6368" />
            <path d="M3 5V3.500a2.500 2.500 0 0 1 5 0V5" fill="none" stroke="#5f6368" strokeWidth="1.500" />
          </svg>
          <AddressInput aria-label="Address" defaultValue="investing.com/charts/live-charts" />
        </AddressBox>
        <Extensions>
          <ExtButton aria-label="Search extension">
            <svg width="12" height="14" fill="none" stroke="#7d3fae" strokeWidth="2"><circle cx="5" cy="5" r="3.500" /><path d="m7 8 3.500 5" /></svg>
          </ExtButton>
          <ExtButton aria-label="Grammarly"><GrammarlyIcon size={16} /></ExtButton>
          <ExtButton aria-label="Query">
            <svg width="16" height="16" fill="none"><circle cx="8" cy="8" r="7.500" fill="#2a78d0" /><circle cx="7.500" cy="7.500" r="2.500" stroke="#fff" strokeWidth="1.500" /><path d="m9.500 9.500 2 2" stroke="#fff" strokeWidth="1.500" /></svg>
          </ExtButton>
          <ExtButton aria-label="Extension">
            <svg width="16" height="16" fill="none" stroke="#fff"><circle cx="8" cy="8" r="7.500" fill="#cfcfcb" stroke="none" /><circle cx="8" cy="8" r="2.500" /><path d="M2 5 6 7M14 4 10 7M4 13l2.500-3M13 12l-3-2.500M8 1v4" /></svg>
          </ExtButton>
          <ExtDivider />
          <ExtButton aria-label="Media">
            <svg width="16" height="14" fill="none" stroke="#5f6368" strokeWidth="2"><path d="M0 2h10M0 6h10M0 10h6M13 10.500V2h3" /><circle cx="11.500" cy="10.500" r="2" fill="#5f6368" stroke="none" /></svg>
          </ExtButton>
          <Avatar>J</Avatar>
          <ExtButton aria-label="Update">
            <svg width="16" height="16"><circle cx="8" cy="8" r="8" fill="#d93025" /><path d="M8 3.500 12 8H9.500v4h-3V8H4Z" fill="#fff" /></svg>
          </ExtButton>
        </Extensions>
      </NavBar>

      <SiteHeader>
        <SearchBox>
          <SearchInput placeholder="Search the website..." aria-label="Search the website" />
          <svg width="17" height="17" fill="none" stroke="#999" strokeWidth="1.500">
            <circle cx="10.500" cy="6" r="5" />
            <path d="M7 9.500 1 15.500" strokeWidth="3" />
          </svg>
        </SearchBox>
        <SignIn href="#signin">Sign In / Free Sign Up</SignIn>
        <HeaderIcons>
          <svg width="16" height="16" viewBox="0 0 16 16" fill="#8e8e8e">
            <path d="M8 1a1 1 0 0 1 1 1c3 .600 4 3 4 5.500 0 3 .500 4 2 5.500H1c1.500-1.500 2-2.500 2-5.500C3 5 4 2.600 7 2a1 1 0 0 1 1-1ZM6.500 14h3a1.500 1.500 0 0 1-3 0Z" />
          </svg>
          <svg width="18" height="16" viewBox="0 0 18 16" fill="#777">
            <path d="M0 5a2 2 0 0 1 2-2v12a2 2 0 0 1-2-2ZM3.500 3h11v12h-11ZM16 3a2 2 0 0 1 2 2v8a2 2 0 0 1-2 2Z" />
            <path d="M6 3V1h6v2" fill="none" stroke="#777" strokeWidth="1.500" />
          </svg>
          <svg width="16" height="16" viewBox="0 0 16 16" fill="none" stroke="#8e8e8e" strokeWidth="1.500">
            <circle cx="8" cy="8" r="7" />
            <path d="M8 4v4.500h5" />
          </svg>
          <svg width="14" height="11" viewBox="0 0 14 11">
            <rect width="14" height="11" fill="#fff" />
            <path d="M0 .500h14M0 3.500h14M0 6.500h14M0 9.500h14" stroke="#d9535a" />
            <rect width="7" height="6" fill="#5558a5" />
          </svg>
        </HeaderIcons>
      </SiteHeader>

      <Main>
        <Tools>
          <ToolList items={tools1} />
          <ToolRule />
          <ToolList items={tools2} />
          <ToolRule />
          <ToolList items={tools3} />
          <Tool $on aria-label="Link"><LinkIcon /></Tool>
          <ToolScroll aria-label="More tools">
            <svg width="18" height="10" fill="none" stroke="#fff" strokeWidth="2"><path d="m1 1 8 7 8-7" /></svg>
          </ToolScroll>
        </Tools>

        <ChartSide>
          <TopBar>
            <Groups>
              <Group>
                <Cell $w={99} $title>XAU/USD</Cell>
                {frames.map(([label, w]) => (
                  <Cell key={label} $w={w} $on={label === '5h'}>{label}</Cell>
                ))}
                <Cell $w={20} aria-label="More intervals"><Caret /></Cell>
              </Group>
              <Group>
                <Cell $w={43} $on aria-label="Candles"><CandleIcon /></Cell>
                <Cell $w={43} aria-label="Area"><AreaIcon /></Cell>
                <Cell $w={43} aria-label="Bars"><BarsIcon /></Cell>
                <Cell $w={20} aria-label="More chart types"><Caret /></Cell>
              </Group>
              <Group><Cell $w={37} aria-label="Settings"><Gear size={18} color={gray} hole="#fff" /></Cell></Group>
              <Group><Cell $w={41} aria-label="Indicators"><IndicatorIcon /></Cell></Group>
              <Group><Cell $w={41} aria-label="Compare"><ScalesIcon /></Cell></Group>
              <Group>
                <Cell $w={26} aria-label="Undo"><UndoIcon /></Cell>
                <Cell $w={26} $on aria-label="Redo"><UndoIcon flip /></Cell>
              </Group>
              <Group><Cell $w={32} aria-label="Add alert"><AlertIcon /></Cell></Group>
            </Groups>
            <Groups>
              <Group><Cell $w={44} aria-label="Snapshot"><CameraIcon /></Cell></Group>
              <Group><Cell $w={45} aria-label="Theme"><Swatch /><Caret /></Cell></Group>
              <Group>
                <Cell $w={51} aria-label="Load"><CloudArrow /></Cell>
                <Cell $w={50} aria-label="Save"><CloudArrow up /></Cell>
              </Group>
              <Group><Cell $w={30} aria-label="Full screen"><ExpandIcon /></Cell></Group>
            </Groups>
          </TopBar>
          <Ledge>
            <LedgeTab aria-label="Hide toolbar"><Caret $c="#bbb" /></LedgeTab>
          </Ledge>
          <ChartFrame>
            <Legend>
              <LegendTitle>
                <svg width="13" height="13" fill="none" stroke="#666"><path d="M.500.500h12v12H.500zM3 6.500h7" /></svg>
                <LegendName>XAU/USD, 300,</LegendName>
                <RowCaret $c="#c8c8c8" />
                <LegendButtons>
                  <SmallButton aria-label="Hide"><SmallEye /></SmallButton>
                  <SmallButton aria-label="Format"><Gear size={12} color="#fff" hole="#d9d9d9" /></SmallButton>
                </LegendButtons>
                <Quotes>
                  <Quote>O<b>1593.85</b></Quote>
                  <Quote>H<b>1596.05</b></Quote>
                  <Quote>L<b>1582.93</b></Quote>
                  <Quote>C<b>1585.74</b></Quote>
                </Quotes>
              </LegendTitle>
              {symbols.map((s) => (
                <LegendRow key={s}>
                  {s}
                  <RowCaret $c="#c8c8c8" />
                  <LegendButtons>
                    <SmallButton $on aria-label={`Hide ${s}`}><SmallEye /></SmallButton>
                    <SmallButton aria-label={`Format ${s}`}><Gear size={12} color="#fff" hole="#d9d9d9" /></SmallButton>
                    <SmallButton aria-label={`Remove ${s}`}><Cross size={10} color="#fff" w={1} /></SmallButton>
                  </LegendButtons>
                </LegendRow>
              ))}
            </Legend>
            <MarketState>Market Closed</MarketState>
            <Logo>Invest<LogoDot>i</LogoDot>ng<small>.com</small></Logo>
            <PriceChart />
          </ChartFrame>
          <EdgeHandle aria-label="Toggle drawing tools" />
          <EdgeHandle $right aria-label="Toggle side panel" />
          <RangeBar>
            <RangeList>
              <RangeItem $w={45}>10y</RangeItem>
              <RangeItem $w={38}>3y</RangeItem>
              <RangeItem $w={38}>1y</RangeItem>
              <RangeItem $w={42}>1m</RangeItem>
              <RangeItem $w={39}>7d</RangeItem>
              <RangeItem $w={39}>1d</RangeItem>
              <RangeItem $w={66}>Go to...</RangeItem>
            </RangeList>
            <RangeList>
              <Clock>09:08:43 <span>(UTC-4)</span></Clock>
              <RangeItem $w={33}>%</RangeItem>
              <RangeItem $w={41}>log</RangeItem>
              <RangeItem $w={49} $blue>auto</RangeItem>
              <RangeItem $w={41} aria-label="Axis settings"><GearOutline /></RangeItem>
            </RangeList>
          </RangeBar>
        </ChartSide>
      </Main>

      <Taskbar>
        <TaskbarBody>
          <TaskButton $w={62} aria-label="Files"><FolderIcon /></TaskButton>
          <TaskButton $w={64} aria-label="NJStar"><NanjiIcon /></TaskButton>
          <TaskButton $w={59} $open aria-label="Grammarly"><GrammarlyIcon size={32} /></TaskButton>
          <TaskButton $w={64} aria-label="Chromium"><ChromeIcon blue /></TaskButton>
          <TaskButton $w={51} $open $stack aria-label="Office"><OfficeIcon /></TaskButton>
          <TaskGap $w={11} />
          <TaskButton $w={55} $open $front aria-label="Chrome"><ChromeIcon /></TaskButton>
          <Tray>
            <svg width="17" height="5"><path d="M0 5 4.500 0 9 5Z" fill="#fff" /></svg>
            <svg width="16" height="16" fill="none" stroke="#fff" strokeWidth="1.500">
              <path d="M2 0v4M5 0v4M0 5h7M1 6v3h5V6M3.500 9v7" />
              <rect x="9" y="2" width="6" height="12" stroke="#333" />
              <path d="m8 8 7 7M15 8l-7 7" stroke="#e02020" strokeWidth="2" />
            </svg>
            <svg width="15" height="14" fill="none" stroke="#fff">
              <path d="M0.500 5h3l4-4v12l-4-4h-3z" fill="#fff" />
              <path d="M9.500 4.500a4 4 0 0 1 0 5M11.500 2.500a6 6 0 0 1 0 9M13 1a8 8 0 0 1 0 12" />
            </svg>
            <svg width="16" height="16">
              <path d="M1 1v15M2 1.500h5l1 1h5v6H8l-1-1H2z" fill="#fff" stroke="#fff" />
              <circle cx="11" cy="11" r="4.500" fill="#d92b2b" />
              <path d="m9 9 4 4M13 9l-4 4" stroke="#fff" strokeWidth="1.500" />
            </svg>
            <svg width="16" height="16" fill="none" stroke="#fff" strokeWidth="1.500">
              <path d="M6 4h9v7H6M10.500 11v3M7 14.500h7M1 1h4v4H1zM3 5v6h3" />
            </svg>
            <TaskClock>9:08 PM<br />4/9/2020</TaskClock>
          </Tray>
        </TaskbarBody>
        <CornerPanel />
      </Taskbar>

      <ImeBar>
        <ImeTrack>
          <ImeKey><ImeRed>南</ImeRed></ImeKey>
          <ImeKey $mode>拼音 <b>Pinyin</b></ImeKey>
          <ImeSpring />
          <ImeCheck type="checkbox" defaultChecked aria-label="Input enabled" />
          <ImeKey><ImeBold>繁</ImeBold></ImeKey>
          <ImeKey aria-label="Keyboard">
            <svg width="15" height="12" stroke="#0b6b6b" fill="#d8f2f2"><path d="M.500.500h14v11H.500zM1 3.500h13M1 6.500h13M3 9.500h9M4 1v8M7 1v8M10 1v8M12.500 1v8" /></svg>
          </ImeKey>
          <ImeKey aria-label="Card">
            <svg width="15" height="12" fill="#fff" stroke="#1c1a8c"><path d="M.500.500h14v11H.500z" /><path d="M3 4.500h5M3 6.500h6M3 8.500h6" /><rect x="10" y="2" width="3" height="3" fill="#e11" stroke="none" /></svg>
          </ImeKey>
          <ImeKey><B5>B5</B5></ImeKey>
        </ImeTrack>
      </ImeBar>
      <GbkWindow><GbkMark>南</GbkMark><span>中文</span><span>GBK</span><span>繁體</span></GbkWindow>
    </Page>
  );
}
